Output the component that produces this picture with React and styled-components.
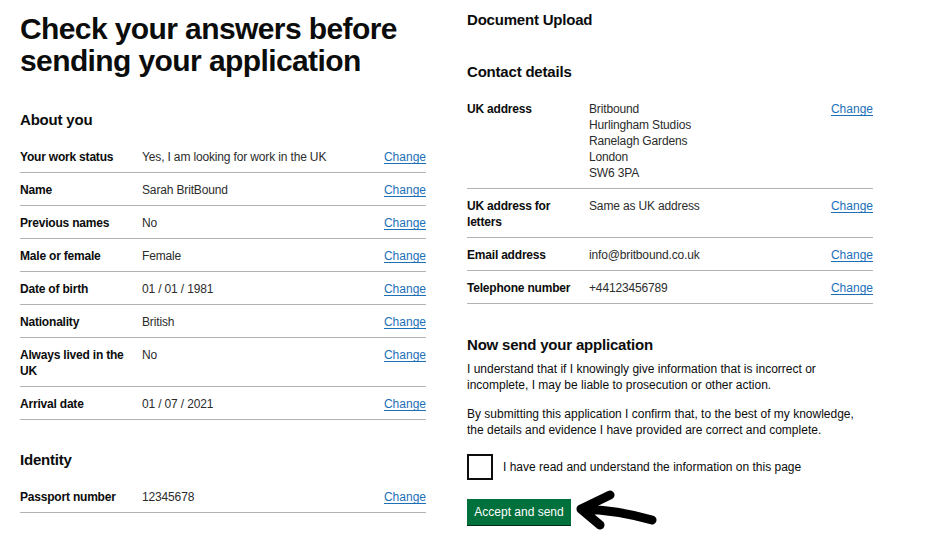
import styled, { createGlobalStyle } from "styled-components"

const GlobalStyle = createGlobalStyle`
    * {
        box-sizing: border-box;
    }

    body {
        margin: 0;
        background: #ffffff;
        font-family: "Liberation Sans", Arial, sans-serif;
        color: #0b0c0c;
    }
`

const aboutYou = [
    { key: "Your work status", value: ["Yes, I am looking for work in the UK"] },
    { key: "Name", value: ["Sarah BritBound"] },
    { key: "Previous names", value: ["No"] },
    { key: "Male or female", value: ["Female"] },
    { key: "Date of birth", value: ["01 / 01 / 1981"] },
    { key: "Nationality", value: ["British"] },
    { key: "Always lived in the UK", value: ["No"] },
    { key: "Arrival date", value: ["01 / 07 / 2021"] },
]

const identity = [{ key: "Passport number", value: ["12345678"] }]

const contact = [
    {
        key: "UK address",
        value: ["Britbound", "Hurlingham Studios", "Ranelagh Gardens", "London", "SW6 3PA"],
    },
    { key: "UK address for letters", value: ["Same as UK address"] },
    { key: "Email address", value: ["info@britbound.co.uk"] },
    { key: "Telephone number", value: ["+44123456789"] },
]

const SummaryList = ({ rows }) => (
    <List>
        {rows.map((row) => (
            <Row key={row.key}>
                <Key>{row.key}</Key>
                <Value>
                    {row.value.map((line) => (
                        <div key={line}>{line}</div>
                    ))}
                </Value>
                <ChangeLink href="#">Change</ChangeLink>
            </Row>
        ))}
    </List>
)

const Arrow = () => (
    <ArrowSvg width="86" height="44" viewBox="0 0 86 44">
        <path
            d="M8 19 Q44 20 79 30 M8 19 L37 5 M8 19 L27 35"
            fill="none"
            stroke="#000"
            strokeWidth="9"
            strokeLinecap="round"
            strokeLinejoin="round"
        />
    </ArrowSvg>
)

export default function App() {
    return (
        <>
            <GlobalStyle />
            <Page>
                <Column>
                    <Title>
                        Check your answers before
                        <br />
                        sending your application
                    </Title>
                    <SectionHeading $top={33} $bottom={10}>About you</SectionHeading>
                    <SummaryList rows={aboutYou} />
                    <SectionHeading $top={30} $bottom={10}>Identity</SectionHeading>
                    <SummaryList rows={identity} />
                </Column>
                <Column>
                    <SectionHeading $top={10} $bottom={0}>Document Upload</SectionHeading>
                    <SectionHeading $top={32} $bottom={10}>Contact details</SectionHeading>
                    <SummaryList rows={contact} />
                    <SectionHeading $top={31} $bottom={0}>Now send your application</SectionHeading>
                    <Body $top={6}>
                        I understand that if I knowingly give information that is incorrect or
                        <br />
                        incomplete, I may be liable to prosecution or other action.
                    </Body>
                    <Body $top={13}>
                        By submitting this application I confirm that, to the best of my knowledge,
                        <br />
                        the details and evidence I have provided are correct and complete.
                    </Body>
                    <CheckRow>
                        <CheckBox type="checkbox" />
                        <CheckLabel>I have read and understand the information on this page</CheckLabel>
                    </CheckRow>
                    <ActionRow>
                        <Button>Accept and send</Button>
                        <Arrow />
                    </ActionRow>
                </Column>
            </Page>
        </>
    )
}

const Page = styled.div`
    display: grid;
    grid-template-columns: 406px 406px;
    column-gap: 41px;
    padding-left: 20px;
    width: 948px;
    height: 558px;
    background: #ffffff;
    overflow: hidden;
`

const Column = styled.div`
    display: flex;
    flex-direction: column;
    align-items: stretch;
`

const Title = styled.h1`
    margin: 13px 0 0;
    font-size: 30px;
    line-height: 32px;
    font-weight: 700;
    letter-spacing: -0.6px;
    color: #0b0c0c;
`

const SectionHeading = styled.h2`
    margin: ${(p) => p.$top}px 0 ${(p) => p.$bottom}px;
    font-size: 15px;
    line-height: 20px;
    font-weight: 700;
    letter-spacing: -0.2px;
    color: #0b0c0c;
`

const List = styled.div`
    display: flex;
    flex-direction: column;
`

const Row = styled.div`
    display: grid;
    grid-template-columns: 122px 1fr auto;
    padding: 9px 0 7px;
    border-bottom: 1px solid #b1b4b6;
    font-size: 12px;
    line-height: 16px;
`

const Key = styled.div`
    font-weight: 700;
    color: #0b0c0c;
    padding-right: 14px;
    letter-spacing: -0.2px;
`

const Value = styled.div`
    color: #2b2c2c;
    letter-spacing: -0.15px;
`

const ChangeLink = styled.a`
    color: #1d70b8;
    text-decoration: underline;
    text-underline-offset: 2px;
`

const Body = styled.p`
    margin: ${(p) => p.$top}px 0 0;
    font-size: 12px;
    line-height: 16px;
    color: #0b0c0c;
`

const CheckRow = styled.label`
    display: flex;
    align-items: center;
    gap: 10px;
    margin-top: 16px;
`

const CheckBox = styled.input`
    appearance: none;
    margin: 0;
    width: 26px;
    height: 26px;
    border: 2px solid #0b0c0c;
    background: #ffffff;
`

const CheckLabel = styled.span`
    font-size: 12px;
    line-height: 16px;
    color: #0b0c0c;
`

const ActionRow = styled.div`
    display: flex;
    align-items: center;
    height: 26px;
    margin-top: 19px;
`

const Button = styled.button`
    width: 104px;
    height: 26px;
    padding: 0;
    border: none;
    border-radius: 0;
    background: #00703c;
    box-shadow: 0 1px 0 #002d18;
    color: #ffffff;
    font-family: "Liberation Sans", Arial, sans-serif;
    font-size: 12px;
    line-height: 16px;
`

const ArrowSvg = styled.svg`
    display: block;
    flex-shrink: 0;
    margin: -9px 0 -9px 2px;
`
